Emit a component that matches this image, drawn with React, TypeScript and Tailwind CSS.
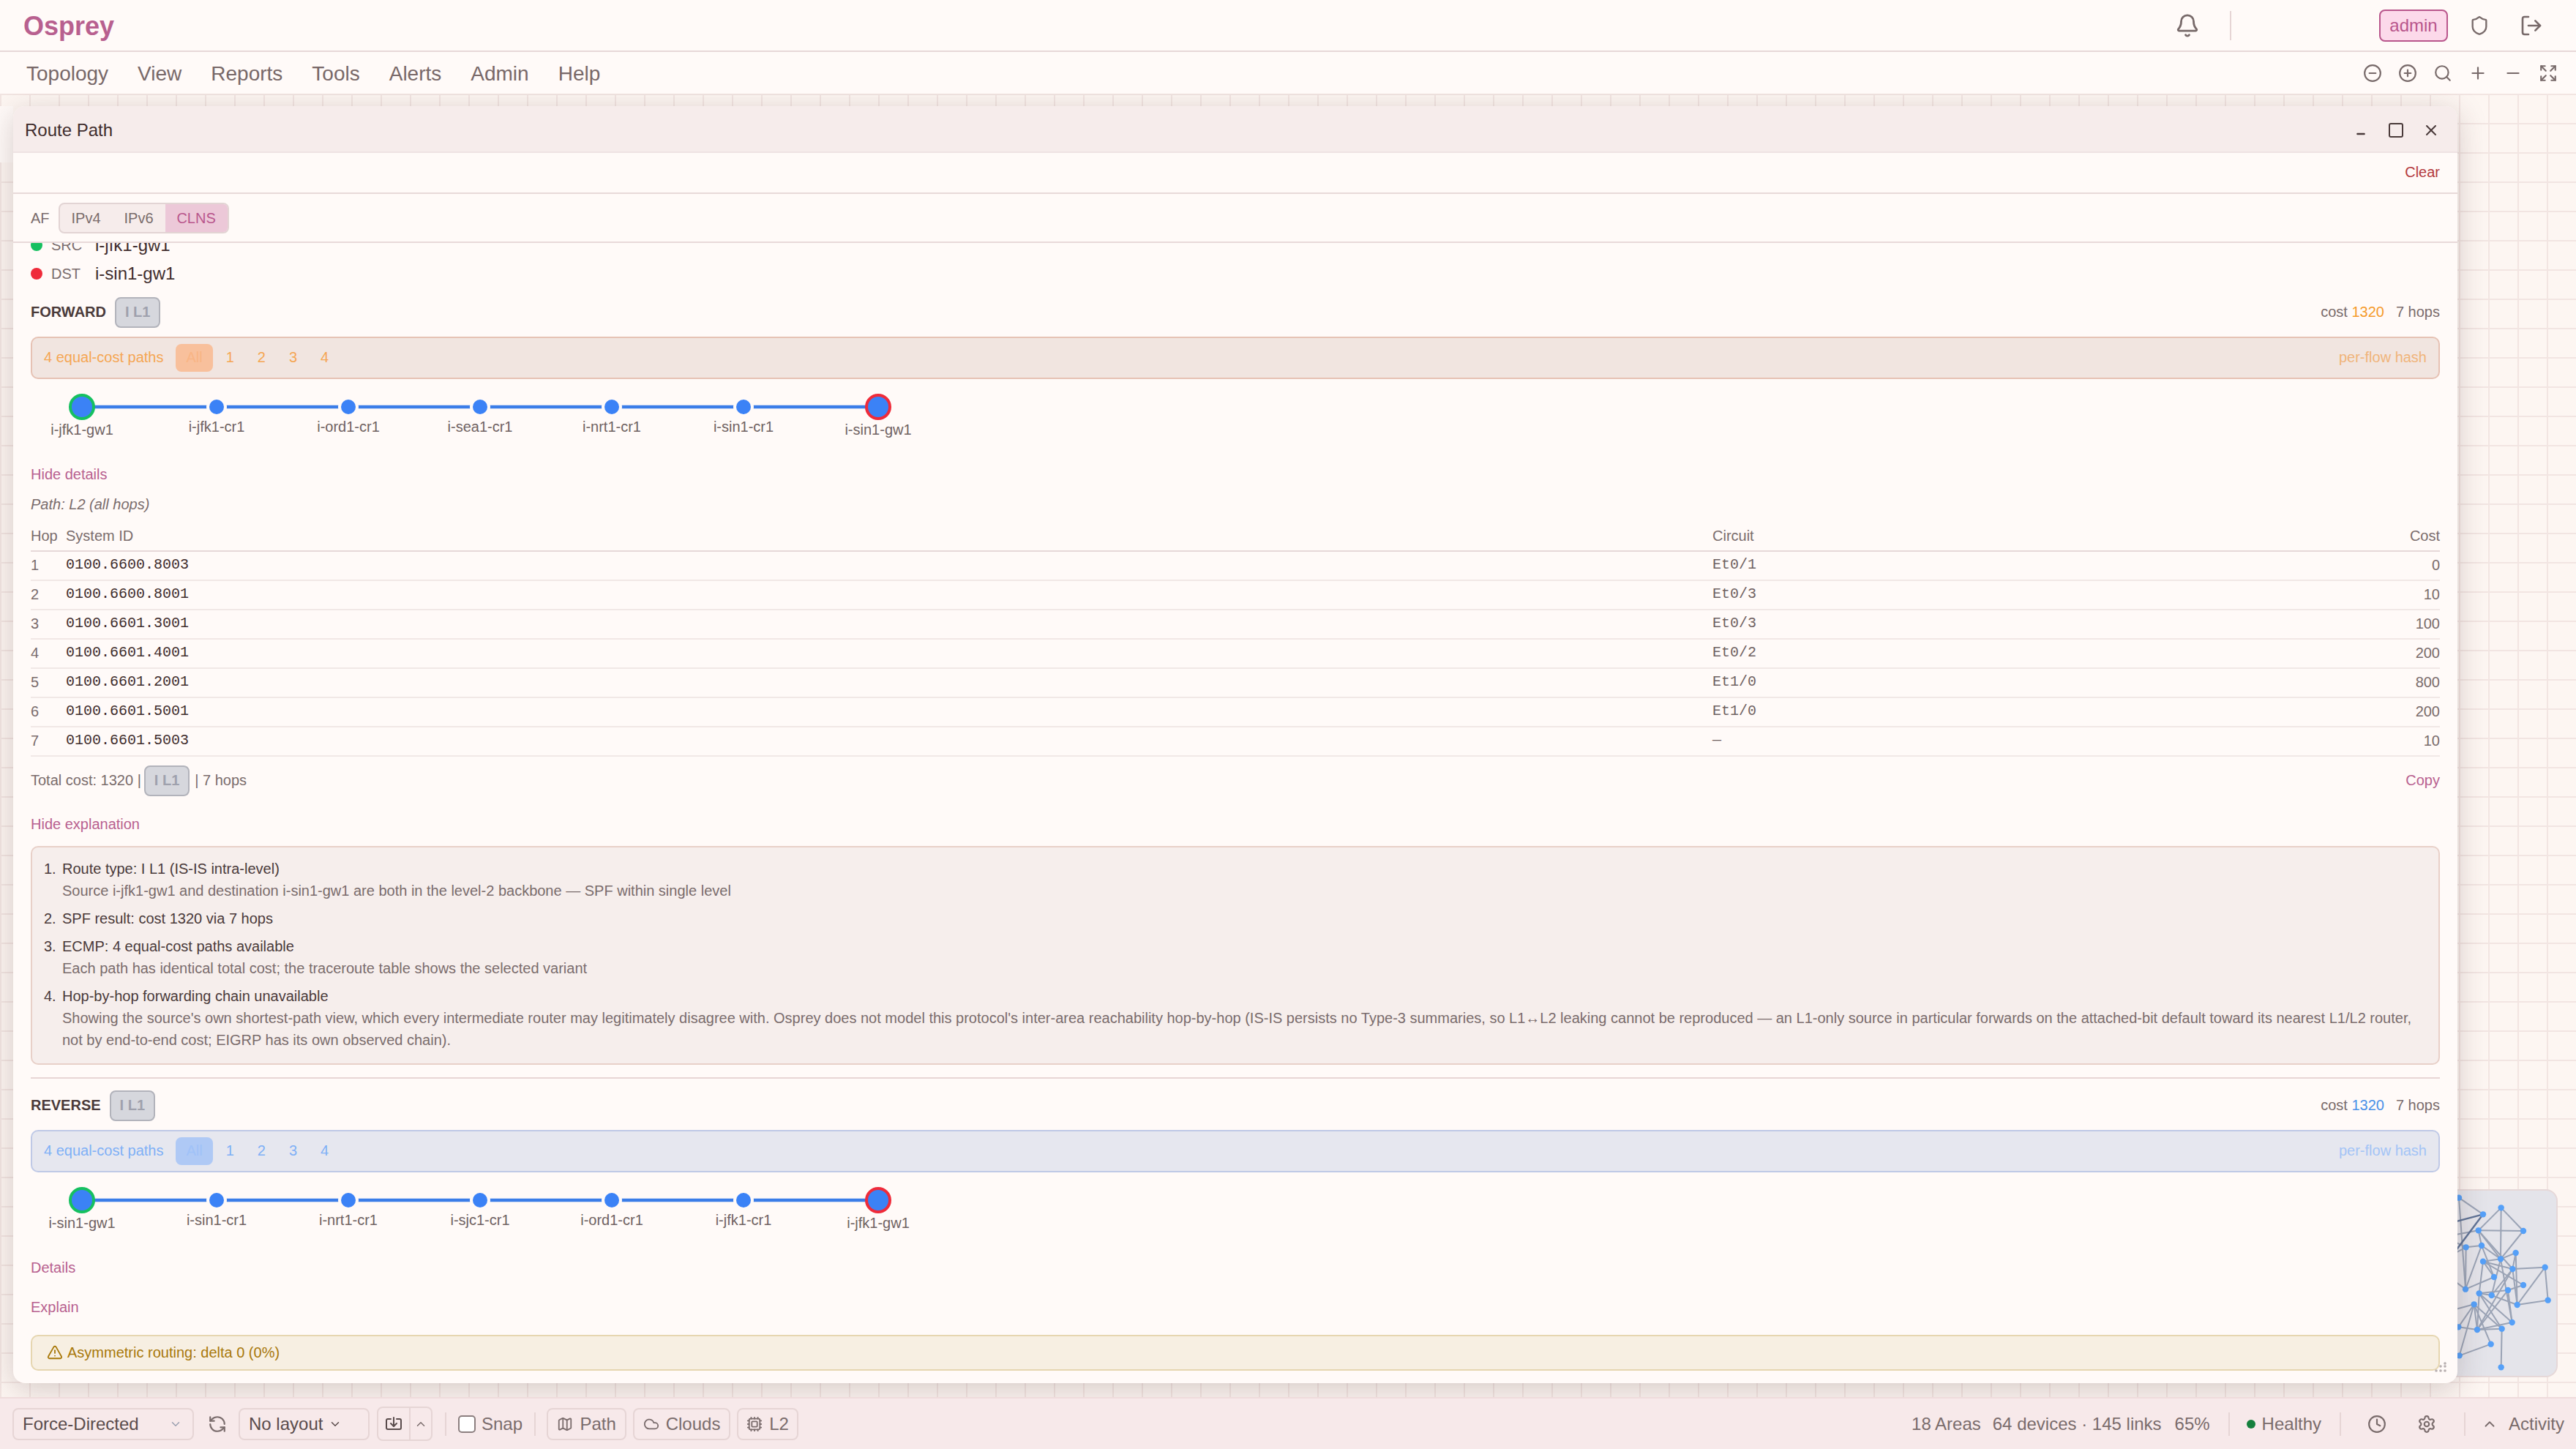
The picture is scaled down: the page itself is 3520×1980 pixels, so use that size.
import { Bell, ChevronDown, ChevronUp, CirclePlus, CircleMinus, Clock, Cloud, Cpu, Expand, Import, LogOut, Map, Minus, Plus, RefreshCcw, Search, Settings, Shield, Square, TriangleAlert, X } from "lucide-react";

const menu = ["Topology", "View", "Reports", "Tools", "Alerts", "Admin", "Help"];

const hops = [
	["1", "0100.6600.8003", "Et0/1", "0"],
	["2", "0100.6600.8001", "Et0/3", "10"],
	["3", "0100.6601.3001", "Et0/3", "100"],
	["4", "0100.6601.4001", "Et0/2", "200"],
	["5", "0100.6601.2001", "Et1/0", "800"],
	["6", "0100.6601.5001", "Et1/0", "200"],
	["7", "0100.6601.5003", "—", "10"],
];

const nodeX = [70, 254, 434, 614, 794, 974, 1158];

// minimap points, read off the picture
const pts: Record<string, [number, number]> = {
	a: [533, 211], b: [459, 238], c: [440, 304], d: [624, 306], e: [453, 366], f: [389, 373], g: [593, 396],
	h: [531, 421], i: [459, 431], j: [713, 455], k: [580, 462], l: [504, 495], m: [624, 528], n: [387, 545],
	o: [443, 562], p: [494, 570], q: [561, 549], r: [422, 607], s: [599, 609], t: [725, 590], u: [578, 681],
	v: [435, 711], w: [536, 707], x: [491, 770], y: [533, 865], z: [362, 817], A: [360, 170], B: [358, 700],
	C: [300, 280], D: [300, 440], E: [300, 330], F: [300, 480], G: [300, 640], H: [300, 420],
};
const edges = ["ac", "ah", "ad", "cd", "dh", "Ab", "ch", "ck", "ce", "eh", "el", "en", "fe", "fn", "ih", "hg", "gk", "gs", "im", "il", "ik", "jk", "jt", "js", "ks", "hu", "qm", "oq", "op", "qv", "ps", "pk", "oi", "ln", "rv", "rw", "rB", "ow", "ou", "vu", "vw", "vk", "wy", "rx", "xz", "Bv", "zr", "qu", "st", "hp", "ov", "An", "Ef", "Hf", "Fn", "Gr", "Ec"];

function Badge() {
	return (
		<span className="inline-flex h-[42px] items-center rounded-[8px] border-2 border-[#b2b3bb] bg-[#d6d7dd] px-[12px] pb-[2px] text-[20px] font-semibold text-[#9fa1ad]">
			I L1
		</span>
	);
}

function EcmpBar({ tone }: { tone: "orange" | "blue" }) {
	const orange = tone === "orange";
	return (
		<div
			className={`mt-[12px] flex h-[58px] items-center rounded-[10px] border-2 pl-[16px] pr-[16px] pb-[1px] text-[20px] ${
				orange ? "border-[#e6c2b4] bg-[#f1e5e0] text-[#f5a653]" : "border-[#bfc9e6] bg-[#e6e7ef] text-[#7fb0f6]"
			}`}
		>
			<span className="mr-[17px] pb-[2px]">4 equal-cost paths</span>
			<div className="flex gap-[4px]">
				<span className={`flex h-[38px] items-center rounded-[8px] px-[14px] pb-[2px] ${orange ? "bg-[#f8c09c] text-[#f9b585]" : "bg-[#afc9f5] text-[#a0c2f8]"}`}>All</span>
				{["1", "2", "3", "4"].map((n) => (
					<span key={n} className="flex h-[38px] items-center px-[14px] pb-[2px]">
						{n}
					</span>
				))}
			</div>
			<span className={`ml-auto pb-[2px] ${orange ? "text-[#f0b47a]" : "text-[#a3c4f6]"}`}>per-flow hash</span>
		</div>
	);
}

function PathDiagram({ names }: { names: string[] }) {
	return (
		<svg width="1300" height="115" className="block font-['Liberation_Sans',sans-serif] text-[20px]">
			<line x1="70" y1="38" x2="1158" y2="38" stroke="#3b7de8" strokeWidth="4.5" />
			{nodeX.map((x, i) => {
				const end = i === 0 || i === nodeX.length - 1;
				return (
					<g key={x}>
						{end ? (
							<circle cx={x} cy="38" r="16" fill="#3b82f6" stroke={i === 0 ? "#16c060" : "#ef2b3a"} strokeWidth="4" />
						) : (
							<>
								<circle cx={x} cy="38" r="14" fill="#fffaf8" />
								<circle cx={x} cy="38" r="10" fill="#3b82f6" />
							</>
						)}
						<text x={x} y={end ? 76 : 72} textAnchor="middle" fill="#6f6262">
							{names[i]}
						</text>
					</g>
				);
			})}
		</svg>
	);
}

function PinkLink({ children, className = "" }: { children: string; className?: string }) {
	return <div className={`h-[30px] text-[20px] leading-[30px] text-[#b8608f] ${className}`}>{children}</div>;
}

function ToolButton({ icon, label, width }: { icon: React.ReactNode; label: string; width: string }) {
	return (
		<button type="button" className={`flex h-[44px] items-center justify-center gap-[9px] rounded-[8px] border-2 border-[#e6d5d5] text-[24px] text-[#7a6c6c] ${width}`}>
			{icon}
			{label}
		</button>
	);
}

function Divider({ className = "" }: { className?: string }) {
	return <div className={`h-[32px] w-[2px] bg-[#e6d5d5] ${className}`} />;
}

function App() {
	return (
		<div className="flex h-[1980px] w-[3520px] flex-col overflow-hidden bg-[#fffaf8] font-['Liberation_Sans',Arial,sans-serif] text-[#7a6c6c]">
			{/* top bar */}
			<header className="flex h-[71px] shrink-0 items-center border-b-2 border-[#e8d9d9] pl-[32px]">
				<span className="pt-[2px] text-[36px] font-bold text-[#b8608f]">Osprey</span>
				<Bell className="ml-auto mr-[41px] h-[34px] w-[34px] text-[#786a6a]" strokeWidth={2} />
				<div className="h-[40px] w-[2px] bg-[#e6d5d5]" />
				<span className="ml-[202px] flex h-[44px] w-[94px] items-center justify-center rounded-[8px] border-2 border-[#b9568c] bg-[#fcd9ea] text-[24px] text-[#b9568c]">admin</span>
				<Shield className="ml-[29px] h-[28px] w-[28px] text-[#786a6a]" strokeWidth={2} />
				<LogOut className="ml-[41px] h-[32px] w-[32px] text-[#786a6a]" strokeWidth={2} />
				<div className="w-[45px]" />
			</header>

			{/* menu bar */}
			<nav className="flex h-[57px] shrink-0 items-center pl-[16px] shadow-[0_2px_3px_rgba(120,90,90,0.12)]">
				{menu.map((m) => (
					<span key={m} className="px-[20px] pt-[2px] text-[28px] text-[#786868]">
						{m}
					</span>
				))}
				<div className="ml-auto mr-[25px] flex items-center gap-[22px] text-[#786a6a]">
					<CircleMinus className="h-[26px] w-[26px]" strokeWidth={2} />
					<CirclePlus className="h-[26px] w-[26px]" strokeWidth={2} />
					<Search className="h-[26px] w-[26px]" strokeWidth={2} />
					<Plus className="h-[26px] w-[26px]" strokeWidth={2} />
					<Minus className="h-[26px] w-[26px]" strokeWidth={2} />
					<Expand className="h-[26px] w-[26px]" strokeWidth={2} />
				</div>
			</nav>

			{/* canvas */}
			<main className="relative flex-1 overflow-hidden bg-[#fdf6f2] bg-[linear-gradient(#f2e5e2_2px,transparent_2px),linear-gradient(90deg,#f2e5e2_2px,transparent_2px)] bg-[size:40px_40px]">
				{/* sliver of the panel behind the window */}
				<div className="absolute left-0 top-[17px] h-[77px] w-[18px] bg-[#fffaf8]" />

				{/* minimap */}
				<div className="absolute left-[3175px] top-[1497px] h-[257px] w-[320px] overflow-hidden rounded-[16px] border-2 border-[#e6d8d8] bg-[#e4e4ea]">
					<svg width="320" height="257" viewBox="3175 1625 320 257" className="absolute -left-[2px] -top-[2px]">
						{edges.map((e) => {
							const [x1, y1] = pts[e[0]];
							const [x2, y2] = pts[e[1]];
							return <line key={e} x1={3240 + x1 / 3} y1={1580 + y1 / 3} x2={3240 + x2 / 3} y2={1580 + y2 / 3} stroke="#9aa3b5" strokeWidth="2" />;
						})}
						<line x1={3240 + 300 / 3} y1={1580 + 280 / 3} x2={3240 + 459 / 3} y2={1580 + 238 / 3} stroke="#5f7396" strokeWidth="2.4" />
						<line x1={3240 + 300 / 3} y1={1580 + 450 / 3} x2={3240 + 459 / 3} y2={1580 + 238 / 3} stroke="#5f7396" strokeWidth="2.4" />
						{Object.keys(pts).map((k) => (
							<circle key={k} cx={3240 + pts[k][0] / 3} cy={1580 + pts[k][1] / 3} r="4.2" fill="#55a0f8" />
						))}
					</svg>
				</div>

				{/* route path window */}
				<section className="absolute left-[18px] top-[17px] flex h-[1745px] w-[3340px] flex-col overflow-hidden rounded-[16px] bg-[#fffaf8] shadow-[0_8px_40px_rgba(70,40,40,0.22)]">
					<div className="flex h-[64px] shrink-0 items-center border-b-2 border-[#efe3e3] bg-[#f6eceb] pl-[16px] pr-[24px]">
						<span className="pt-[3px] text-[24px] text-[#3f2d2d]">Route Path</span>
						<div className="ml-auto flex translate-y-[2px] items-center gap-[24px] text-[#4a3a3a]">
							<Minus className="h-[24px] w-[24px] translate-y-[5px] scale-x-[0.7]" strokeWidth={2.4} />
							<Square className="h-[24px] w-[24px]" strokeWidth={2} />
							<X className="h-[24px] w-[24px]" strokeWidth={2} />
						</div>
					</div>
					<div className="flex h-[56px] shrink-0 items-center justify-end border-b-2 border-[#e8d9d9] pb-[2px] pr-[24px] text-[20px] text-[#b3383c]">Clear</div>
					<div className="flex h-[67px] shrink-0 items-center border-b-2 border-[#e8d9d9] pl-[24px] text-[20px]">
						<span className="mr-[12px]">AF</span>
						<div className="flex h-[42px] overflow-hidden rounded-[8px] border-2 border-[#e2d4d4] bg-[#f6eceb]">
							<span className="flex w-[72px] items-center justify-center">IPv4</span>
							<span className="flex w-[72px] items-center justify-center">IPv6</span>
							<span className="flex w-[85px] items-center justify-center bg-[#ecc8d8] text-[#b9568c]">CLNS</span>
						</div>
					</div>

					<div className="flex-1 overflow-hidden px-[24px]">
						<div className="-mt-[16px]">
							<div className="flex h-[39px] items-center pb-[2px] text-[20px]">
								<span className="h-[16px] w-[16px] rounded-full bg-[#16c060]" />
								<span className="ml-[12px] w-[60px]">SRC</span>
								<span className="text-[24px] text-[#3f2d2d]">i-jfk1-gw1</span>
							</div>
							<div className="flex h-[39px] items-center pb-[1px] text-[20px]">
								<span className="h-[16px] w-[16px] rounded-full bg-[#ef2b3a]" />
								<span className="ml-[12px] w-[60px]">DST</span>
								<span className="text-[24px] text-[#3f2d2d]">i-sin1-gw1</span>
							</div>

							{/* forward */}
							<div className="mt-[12px] flex h-[42px] items-center text-[20px]">
								<span className="mr-[12px] pb-[2px] font-bold text-[#4a3a3a]">FORWARD</span>
								<Badge />
								<span className="ml-auto pb-[2px]">
									cost <span className="text-[#f59a2b]">1320</span>
									<span className="ml-[16px]">7 hops</span>
								</span>
							</div>
							<EcmpBar tone="orange" />
							<PathDiagram names={["i-jfk1-gw1", "i-jfk1-cr1", "i-ord1-cr1", "i-sea1-cr1", "i-nrt1-cr1", "i-sin1-cr1", "i-sin1-gw1"]} />
							<PinkLink>Hide details</PinkLink>
							<div className="mt-[11px] h-[30px] text-[20px] italic leading-[30px]">Path: L2 (all hops)</div>

							<div className="mt-[8px] flex h-[42px] items-center border-b-2 border-[#e6d8d8] pb-[1px] text-[20px]">
								<span className="w-[48px]">Hop</span>
								<span className="w-[2250px]">System ID</span>
								<span className="flex-1">Circuit</span>
								<span>Cost</span>
							</div>
							{hops.map(([n, id, circuit, cost]) => (
								<div key={n} className="flex h-[40px] items-center border-b-2 border-[#f1e8e6] text-[20px]">
									<span className="w-[48px] pb-[2px]">{n}</span>
									<span className="w-[2250px] -translate-y-[1px] font-['Liberation_Mono',monospace] text-[#3f2d2d]">{id}</span>
									<span className="flex-1 -translate-y-[1px] font-['Liberation_Mono',monospace] text-[#6f6262]">{circuit}</span>
									<span className="pb-[2px]">{cost}</span>
								</div>
							))}

							<div className="mt-[12px] flex h-[42px] items-center text-[20px]">
								<span className="mr-[4px] pb-[2px]">Total cost: 1320 |</span>
								<Badge />
								<span className="ml-[7px] pb-[2px]">| 7 hops</span>
								<span className="ml-auto pb-[2px] text-[#b8608f]">Copy</span>
							</div>
							<PinkLink className="mt-[23px]">Hide explanation</PinkLink>

							<ol className="mt-[15px] flex h-[299px] flex-col gap-[8px] rounded-[10px] border-2 border-[#e8d0c8] bg-[#f6eeec] pl-[16px] pr-[30px] pt-[14px] text-[20px] leading-[30px]">
								<li className="flex">
									<span className="w-[25px] shrink-0 text-[#4a3a3a]">1.</span>
									<div>
										<div className="text-[#4a3a3a]">Route type: I L1 (IS-IS intra-level)</div>
										<div>Source i-jfk1-gw1 and destination i-sin1-gw1 are both in the level-2 backbone — SPF within single level</div>
									</div>
								</li>
								<li className="flex">
									<span className="w-[25px] shrink-0 text-[#4a3a3a]">2.</span>
									<div className="text-[#4a3a3a]">SPF result: cost 1320 via 7 hops</div>
								</li>
								<li className="flex">
									<span className="w-[25px] shrink-0 text-[#4a3a3a]">3.</span>
									<div>
										<div className="text-[#4a3a3a]">ECMP: 4 equal-cost paths available</div>
										<div>Each path has identical total cost; the traceroute table shows the selected variant</div>
									</div>
								</li>
								<li className="flex">
									<span className="w-[25px] shrink-0 text-[#4a3a3a]">4.</span>
									<div>
										<div className="text-[#4a3a3a]">Hop-by-hop forwarding chain unavailable</div>
										<div>
											Showing the source's own shortest-path view, which every intermediate router may legitimately disagree with. Osprey does not model this protocol's inter-area reachability hop-by-hop (IS-IS persists no Type-3 summaries, so L1↔L2 leaking cannot be reproduced — an L1-only source in particular forwards on the attached-bit default toward its nearest L1/L2 router, not by end-to-end cost; EIGRP has its own observed chain).
										</div>
									</div>
								</li>
							</ol>

							<div className="mt-[17px] h-[2px] bg-[#e8d5d5]" />

							{/* reverse */}
							<div className="mt-[16px] flex h-[42px] items-center text-[20px]">
								<span className="mr-[12px] pb-[2px] font-bold text-[#4a3a3a]">REVERSE</span>
								<Badge />
								<span className="ml-auto pb-[2px]">
									cost <span className="text-[#4a90e8]">1320</span>
									<span className="ml-[16px]">7 hops</span>
								</span>
							</div>
							<EcmpBar tone="blue" />
							<PathDiagram names={["i-sin1-gw1", "i-sin1-cr1", "i-nrt1-cr1", "i-sjc1-cr1", "i-ord1-cr1", "i-jfk1-cr1", "i-jfk1-gw1"]} />
							<PinkLink>Details</PinkLink>
							<PinkLink className="mt-[24px]">Explain</PinkLink>

							<div className="mt-[23px] flex h-[49px] items-center rounded-[10px] border-2 border-[#e6d6b0] bg-[#f7efe2] pb-[1px] pl-[20px] text-[20px] text-[#a8780a]">
								<TriangleAlert className="mr-[6px] h-[22px] w-[22px]" strokeWidth={2} />
								Asymmetric routing: delta 0 (0%)
							</div>
						</div>
					</div>

					{/* resize grip */}
					<svg width="16" height="14" className="absolute bottom-[15px] right-[15px]" fill="#b8b0b0">
						<circle cx="14" cy="2" r="1.8" />
						<circle cx="8" cy="6" r="1.8" />
						<circle cx="14" cy="6" r="1.8" />
						<circle cx="2" cy="12" r="1.8" />
						<circle cx="8" cy="12" r="1.8" />
						<circle cx="14" cy="12" r="1.8" />
					</svg>
				</section>
			</main>

			{/* bottom toolbar */}
			<footer className="flex h-[71px] shrink-0 items-center border-t-2 border-[#efdcdc] bg-[#f7e9ea] pl-[17px] pr-[16px] text-[24px] text-[#7a6c6c]">
				<div className="flex h-[44px] w-[248px] items-center rounded-[8px] border-2 border-[#e6d5d5] pl-[12px] text-[#5a4c4c]">
					Force-Directed
					<ChevronDown className="ml-auto mr-[14px] h-[18px] w-[18px] text-[#9aa0b0]" strokeWidth={2} />
				</div>
				<RefreshCcw className="ml-[19px] h-[26px] w-[26px]" strokeWidth={2} />
				<div className="ml-[16px] flex h-[44px] w-[179px] items-center rounded-[8px] border-2 border-[#e6d5d5] pl-[12px] text-[#5a4c4c]">
					No layout
					<ChevronDown className="ml-[8px] h-[18px] w-[18px]" strokeWidth={2} />
				</div>
				<div className="ml-[10px] flex h-[47px] w-[76px] rounded-[8px] border-2 border-[#e6d5d5]">
					<div className="flex w-[44px] items-center justify-center border-r-2 border-[#e6d5d5]">
						<Import className="h-[24px] w-[24px] text-[#5a4c4c]" strokeWidth={2} />
					</div>
					<div className="flex flex-1 items-center justify-center">
						<ChevronUp className="h-[18px] w-[18px]" strokeWidth={2} />
					</div>
				</div>
				<Divider className="ml-[17px]" />
				<span className="ml-[16px] h-[24px] w-[24px] rounded-[5px] border-2 border-[#8c7f7f] bg-white" />
				<span className="ml-[8px]">Snap</span>
				<Divider className="ml-[16px]" />
				<div className="ml-[15px] flex items-center gap-[9px]">
					<ToolButton icon={<Map className="h-[22px] w-[22px]" strokeWidth={2} />} label="Path" width="w-[109px]" />
					<ToolButton icon={<Cloud className="h-[22px] w-[22px]" strokeWidth={2} />} label="Clouds" width="w-[133px]" />
					<ToolButton icon={<Cpu className="h-[22px] w-[22px]" strokeWidth={2} />} label="L2" width="w-[84px]" />
				</div>
				<span className="ml-auto">18 Areas</span>
				<span className="ml-[16px]">64 devices · 145 links</span>
				<span className="ml-[18px]">65%</span>
				<Divider className="ml-[25px]" />
				<span className="ml-[23px] h-[12px] w-[12px] rounded-full bg-[#15803d]" />
				<span className="ml-[9px]">Healthy</span>
				<Divider className="ml-[25px]" />
				<Clock className="ml-[36px] h-[26px] w-[26px]" strokeWidth={2} />
				<Settings className="ml-[42px] h-[26px] w-[26px]" strokeWidth={2} />
				<Divider className="ml-[38px]" />
				<ChevronUp className="ml-[22px] h-[22px] w-[22px]" strokeWidth={2} />
				<span className="ml-[15px]">Activity</span>
			</footer>
		</div>
	);
}

export default App;
